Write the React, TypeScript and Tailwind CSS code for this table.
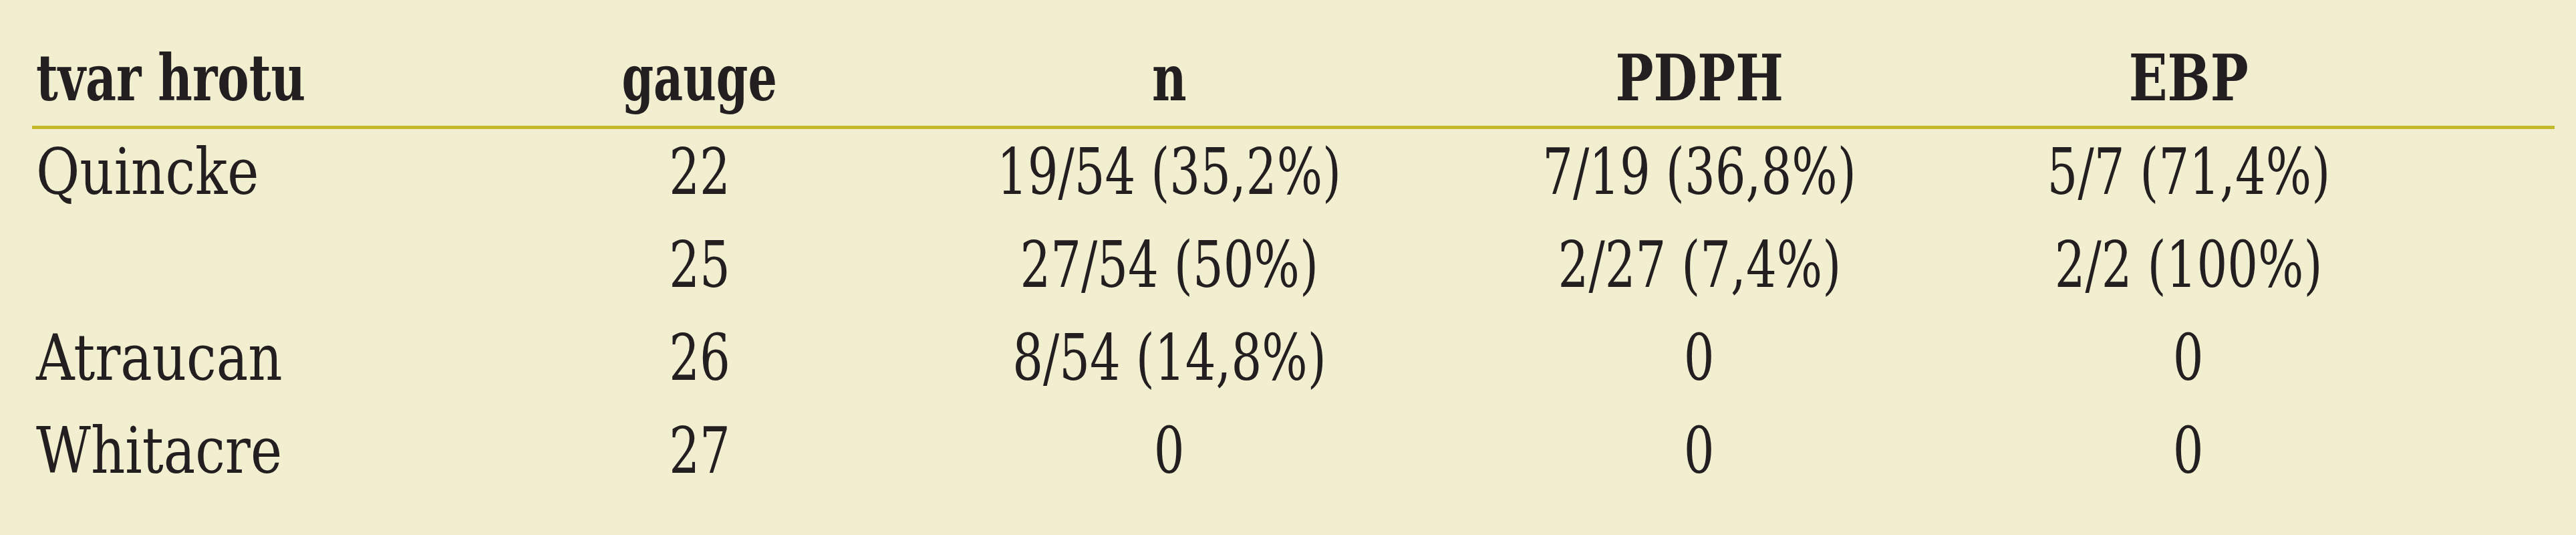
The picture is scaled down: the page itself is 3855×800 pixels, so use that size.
import React from "react";

const rows = [
  { tip: "Quincke", gauge: "22", n: "19/54 (35,2%)", pdph: "7/19 (36,8%)", ebp: "5/7 (71,4%)" },
  { tip: "", gauge: "25", n: "27/54 (50%)", pdph: "2/27 (7,4%)", ebp: "2/2 (100%)" },
  { tip: "Atraucan", gauge: "26", n: "8/54 (14,8%)", pdph: "0", ebp: "0" },
  { tip: "Whitacre", gauge: "27", n: "0", pdph: "0", ebp: "0" },
];

// column tracks: first column is left aligned, the rest are centred
const cols = "grid grid-cols-[699px_600px_806px_780px_684px]";

function Head({ children, left, squeeze }: { children: React.ReactNode; left?: boolean; squeeze: string }) {
  return (
    <div className={left ? "flex justify-start pl-[6px]" : "flex justify-center"}>
      <span
        className={
          "inline-block whitespace-nowrap font-bold " +
          squeeze +
          (left ? " origin-left" : " origin-center")
        }
      >
        {children}
      </span>
    </div>
  );
}

function Cell({ children, left }: { children: React.ReactNode; left?: boolean }) {
  return (
    <div className={left ? "flex justify-start pl-[6px]" : "flex justify-center"}>
      <span
        className={
          "inline-block whitespace-nowrap " +
          (left ? "origin-left scale-x-[0.83]" : "origin-center scale-x-[0.75]")
        }
      >
        {children}
      </span>
    </div>
  );
}

export default function App() {
  return (
    <div
      className="w-[3855px] h-[800px] bg-[#f2efd1] text-[#231f20] text-[96px] leading-[96px] pl-[48px] overflow-hidden"
      style={{ fontFamily: '"DejaVu Serif", "Liberation Serif", serif' }}
    >
      <div className="w-[3775px]">
        <div className={cols + " pt-[69px] pb-[23px] border-b-[5px] border-[#c4b92b]"}>
          <Head left squeeze="scale-x-[0.74]">tvar hrotu</Head>
          <Head squeeze="scale-x-[0.71]">gauge</Head>
          <Head squeeze="scale-x-[0.74]">n</Head>
          <Head squeeze="scale-x-[0.79]">PDPH</Head>
          <Head squeeze="scale-x-[0.79]">EBP</Head>
        </div>
        <div className="pt-[16px]">
          {rows.map((r, i) => (
            <div key={i} className={cols + " h-[139px]"}>
              <Cell left>{r.tip}</Cell>
              <Cell>{r.gauge}</Cell>
              <Cell>{r.n}</Cell>
              <Cell>{r.pdph}</Cell>
              <Cell>{r.ebp}</Cell>
            </div>
          ))}
        </div>
      </div>
    </div>
  );
}
